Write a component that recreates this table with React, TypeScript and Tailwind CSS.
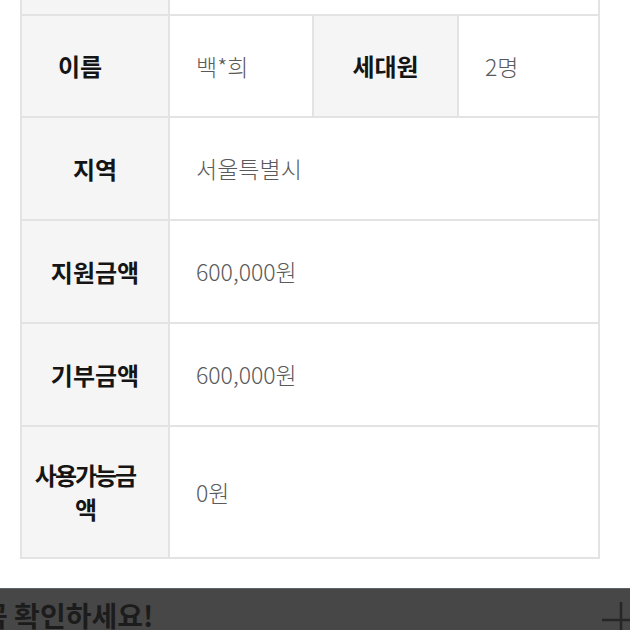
const font = { fontFamily: '"Noto Sans CJK KR", "Noto Sans", sans-serif' };

function Label({ children, className = '' }: { children: React.ReactNode; className?: string }) {
  return (
    <div className={`flex items-center justify-center bg-[#f5f5f5] border-r-2 border-[#e3e3e3] text-center text-[24px] font-bold leading-[34px] text-[#151515] ${className}`}>
      {children}
    </div>
  );
}

function Value({ children, className = '' }: { children: React.ReactNode; className?: string }) {
  return (
    <div className={`flex items-center pl-[26px] text-[23px] font-light text-[#5a5a5a] ${className}`}>
      {children}
    </div>
  );
}

const rows = [
  { label: '지역', value: '서울특별시' },
  { label: '지원금액', value: '600,000원' },
  { label: '기부금액', value: '600,000원' },
];

export default function App() {
  return (
    <div className="h-[630px] overflow-hidden bg-white" style={font}>
      <div className="ml-[20px] w-[580px] border-x-2 border-b-2 border-[#e3e3e3]">
        {/* row cut off at the top */}
        <div className="flex h-[14px]">
          <div className="w-[148px] bg-[#f5f5f5] border-r-2 border-[#e3e3e3]" />
          <div className="flex-1" />
        </div>

        {/* name / household */}
        <div className="flex h-[102px] border-t-2 border-[#e3e3e3]">
          <Label className="w-[148px] pr-[30px]">이름</Label>
          <Value className="w-[144px] border-r-2 border-[#e3e3e3]">백*희</Value>
          <Label className="w-[145px]">세대원</Label>
          <Value className="flex-1 pl-[25px]">2명</Value>
        </div>

        {rows.map((r) => (
          <div key={r.label} className="flex h-[103px] border-t-2 border-[#e3e3e3]">
            <Label className="w-[148px]">{r.label}</Label>
            <Value className="flex-1">{r.value}</Value>
          </div>
        ))}

        <div className="flex h-[132px] border-t-2 border-[#e3e3e3]">
          <Label className="w-[148px] pl-[8px] pr-[28px] tracking-[-2px]">사용가능금액</Label>
          <Value className="flex-1">0원</Value>
        </div>
      </div>

      {/* notice bar */}
      <div className="mt-[29px] flex h-[44px] items-start justify-between overflow-hidden border-t border-[#5b6268] bg-[#474747]">
        <p className="ml-[-18px] mt-[9px] whitespace-nowrap text-[28px] font-bold leading-[34px] text-[#1c1c1c]">
          꼭 확인하세요!
        </p>
        <svg width="28" height="32" viewBox="0 0 28 32" className="mt-[13px] shrink-0">
          <path d="M0 18H28M19 0V32" stroke="#262626" strokeWidth="2.5" fill="none" />
        </svg>
      </div>
    </div>
  );
}
